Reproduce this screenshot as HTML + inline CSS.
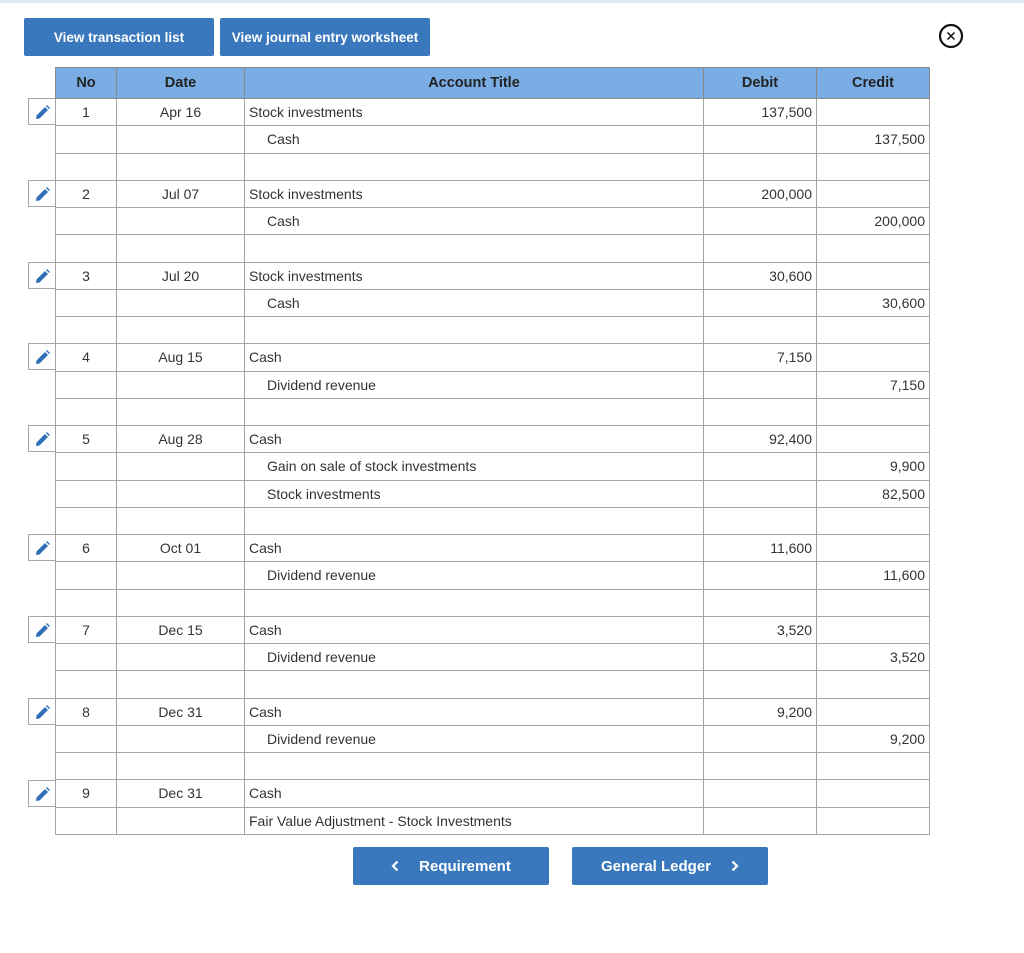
<!DOCTYPE html>
<html><head><meta charset="utf-8"><style>
body{margin:0;width:1024px;height:953px;background:#fff;font-family:"Liberation Sans",Arial,sans-serif;position:relative;overflow:hidden}
.top{position:absolute;left:0;top:0;width:1024px;height:3px;background:#dbeaf8}
.btn{position:absolute;background:#3a78bd;color:#fff;font-weight:bold;border-radius:2px;display:flex;align-items:center;justify-content:center;font-size:13.5px}
table{position:absolute;left:55px;top:67px;border-collapse:collapse;table-layout:fixed;width:874px}
td,th{border:1px solid #a6a6a6;padding:0 4px;font-size:14px;color:#333;white-space:nowrap;overflow:hidden}
th{background:#79ade3;height:30px;font-size:14.5px;color:#222;border-color:#8a8a8a}
td{height:26.26px}
td:nth-child(1),td:nth-child(2){text-align:center}
td:nth-child(4),td:nth-child(5){text-align:right}
.in{padding-left:22px}
.ed{position:absolute;left:28px;width:27px;height:27px;border:1px solid #a6a6a6;border-right:none;box-sizing:border-box;background:#fff}
.ed svg{position:absolute;left:6px;top:6px}
</style></head><body>
<div class="top"></div>
<div class="btn" style="left:24px;top:18px;width:190px;height:38px">View transaction list</div>
<div class="btn" style="left:220px;top:18px;width:210px;height:38px">View journal entry worksheet</div>
<svg style="position:absolute;left:938px;top:23px" width="26" height="26" viewBox="0 0 26 26"><circle cx="13" cy="13" r="11" fill="none" stroke="#111" stroke-width="2.2"/><path d="M9.5 9.5L16.5 16.5M16.5 9.5L9.5 16.5" stroke="#111" stroke-width="1.5"/></svg>
<table>
<colgroup><col style="width:61px"><col style="width:128px"><col style="width:459px"><col style="width:113px"><col style="width:113px"></colgroup>
<tr><th>No</th><th>Date</th><th>Account Title</th><th>Debit</th><th>Credit</th></tr>
<tr><td>1</td><td>Apr 16</td><td>Stock investments</td><td>137,500</td><td></td></tr>
<tr><td></td><td></td><td class="in">Cash</td><td></td><td>137,500</td></tr>
<tr><td></td><td></td><td></td><td></td><td></td></tr>
<tr><td>2</td><td>Jul 07</td><td>Stock investments</td><td>200,000</td><td></td></tr>
<tr><td></td><td></td><td class="in">Cash</td><td></td><td>200,000</td></tr>
<tr><td></td><td></td><td></td><td></td><td></td></tr>
<tr><td>3</td><td>Jul 20</td><td>Stock investments</td><td>30,600</td><td></td></tr>
<tr><td></td><td></td><td class="in">Cash</td><td></td><td>30,600</td></tr>
<tr><td></td><td></td><td></td><td></td><td></td></tr>
<tr><td>4</td><td>Aug 15</td><td>Cash</td><td>7,150</td><td></td></tr>
<tr><td></td><td></td><td class="in">Dividend revenue</td><td></td><td>7,150</td></tr>
<tr><td></td><td></td><td></td><td></td><td></td></tr>
<tr><td>5</td><td>Aug 28</td><td>Cash</td><td>92,400</td><td></td></tr>
<tr><td></td><td></td><td class="in">Gain on sale of stock investments</td><td></td><td>9,900</td></tr>
<tr><td></td><td></td><td class="in">Stock investments</td><td></td><td>82,500</td></tr>
<tr><td></td><td></td><td></td><td></td><td></td></tr>
<tr><td>6</td><td>Oct 01</td><td>Cash</td><td>11,600</td><td></td></tr>
<tr><td></td><td></td><td class="in">Dividend revenue</td><td></td><td>11,600</td></tr>
<tr><td></td><td></td><td></td><td></td><td></td></tr>
<tr><td>7</td><td>Dec 15</td><td>Cash</td><td>3,520</td><td></td></tr>
<tr><td></td><td></td><td class="in">Dividend revenue</td><td></td><td>3,520</td></tr>
<tr><td></td><td></td><td></td><td></td><td></td></tr>
<tr><td>8</td><td>Dec 31</td><td>Cash</td><td>9,200</td><td></td></tr>
<tr><td></td><td></td><td class="in">Dividend revenue</td><td></td><td>9,200</td></tr>
<tr><td></td><td></td><td></td><td></td><td></td></tr>
<tr><td>9</td><td>Dec 31</td><td>Cash</td><td></td><td></td></tr>
<tr><td></td><td></td><td>Fair Value Adjustment - Stock Investments</td><td></td><td></td></tr>
</table>
<div class="ed" style="top:98px"><svg width="15" height="15" viewBox="0 0 15 15"><path d="M1 14L1.5 10.5L10 2L13 5L4.5 13.5Z M11 1L12 0L15 3L14 4Z" fill="#2f6fba"/></svg></div>
<div class="ed" style="top:180px"><svg width="15" height="15" viewBox="0 0 15 15"><path d="M1 14L1.5 10.5L10 2L13 5L4.5 13.5Z M11 1L12 0L15 3L14 4Z" fill="#2f6fba"/></svg></div>
<div class="ed" style="top:261.5px"><svg width="15" height="15" viewBox="0 0 15 15"><path d="M1 14L1.5 10.5L10 2L13 5L4.5 13.5Z M11 1L12 0L15 3L14 4Z" fill="#2f6fba"/></svg></div>
<div class="ed" style="top:343px"><svg width="15" height="15" viewBox="0 0 15 15"><path d="M1 14L1.5 10.5L10 2L13 5L4.5 13.5Z M11 1L12 0L15 3L14 4Z" fill="#2f6fba"/></svg></div>
<div class="ed" style="top:425px"><svg width="15" height="15" viewBox="0 0 15 15"><path d="M1 14L1.5 10.5L10 2L13 5L4.5 13.5Z M11 1L12 0L15 3L14 4Z" fill="#2f6fba"/></svg></div>
<div class="ed" style="top:534px"><svg width="15" height="15" viewBox="0 0 15 15"><path d="M1 14L1.5 10.5L10 2L13 5L4.5 13.5Z M11 1L12 0L15 3L14 4Z" fill="#2f6fba"/></svg></div>
<div class="ed" style="top:616px"><svg width="15" height="15" viewBox="0 0 15 15"><path d="M1 14L1.5 10.5L10 2L13 5L4.5 13.5Z M11 1L12 0L15 3L14 4Z" fill="#2f6fba"/></svg></div>
<div class="ed" style="top:698px"><svg width="15" height="15" viewBox="0 0 15 15"><path d="M1 14L1.5 10.5L10 2L13 5L4.5 13.5Z M11 1L12 0L15 3L14 4Z" fill="#2f6fba"/></svg></div>
<div class="ed" style="top:780px"><svg width="15" height="15" viewBox="0 0 15 15"><path d="M1 14L1.5 10.5L10 2L13 5L4.5 13.5Z M11 1L12 0L15 3L14 4Z" fill="#2f6fba"/></svg></div>
<div class="btn" style="left:353px;top:847px;width:196px;height:38px;font-size:15px"><svg width="8" height="12" viewBox="0 0 8 12" style="margin-right:20px"><path d="M6.5 1.5L2 6L6.5 10.5" fill="none" stroke="#fff" stroke-width="2.2"/></svg>Requirement</div>
<div class="btn" style="left:572px;top:847px;width:196px;height:38px;font-size:15px">General Ledger<svg width="8" height="12" viewBox="0 0 8 12" style="margin-left:20px"><path d="M1.5 1.5L6 6L1.5 10.5" fill="none" stroke="#fff" stroke-width="2.2"/></svg></div>
</body></html>
